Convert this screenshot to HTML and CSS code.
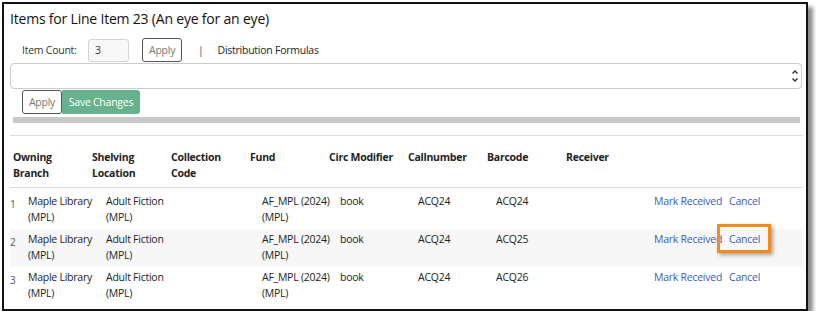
FILE: index.html
```html
<!DOCTYPE html>
<html lang="en">
<head>
  <meta charset="UTF-8" />
  <title>Items for Line Item 23</title>
  <link rel="stylesheet" href="styles.css">
</head>
<body>
  <div class="frame">
    <h2 class="title">Items for Line Item 23 (An eye for an eye)</h2>

    <div class="count-row">
      <label for="itemCount">Item Count:</label>
      <input type="text" id="itemCount" class="count-input" value="3" />
      <button class="btn">Apply</button>
      <span class="sep">|</span>
      <span>Distribution Formulas</span>
    </div>

    <div class="select-box">
      <svg class="spin" width="8" height="16" viewBox="0 0 8 16">
        <path d="M1.5 5.5 L4 3 L6.5 5.5" fill="none" stroke="#333" stroke-width="1.4" />
        <path d="M1.5 10.5 L4 13 L6.5 10.5" fill="none" stroke="#333" stroke-width="1.4" />
      </svg>
    </div>

    <div class="actions">
      <button class="btn">Apply</button>
      <button class="btn btn-save">Save Changes</button>
    </div>

    <div class="progress"></div>
    <div class="rule"></div>

    <div class="head">
      <div>Owning<br>Branch</div>
      <div>Shelving<br>Location</div>
      <div>Collection<br>Code</div>
      <div>Fund</div>
      <div>Circ Modifier</div>
      <div>Callnumber</div>
      <div>Barcode</div>
      <div>Receiver</div>
    </div>
    <div class="rule"></div>

    <div class="items">
      <div class="item">
        <div class="num">1</div>
        <div>Maple Library<br>(MPL)</div>
        <div>Adult Fiction<br>(MPL)</div>
        <div></div>
        <div>AF_MPL (2024)<br>(MPL)</div>
        <div>book</div>
        <div>ACQ24</div>
        <div>ACQ24</div>
        <div></div>
        <div class="links"><a href="#">Mark Received</a><a href="#" class="cancel">Cancel</a></div>
      </div>
      <div class="item alt">
        <div class="num">2</div>
        <div>Maple Library<br>(MPL)</div>
        <div>Adult Fiction<br>(MPL)</div>
        <div></div>
        <div>AF_MPL (2024)<br>(MPL)</div>
        <div>book</div>
        <div>ACQ24</div>
        <div>ACQ25</div>
        <div></div>
        <div class="links"><a href="#">Mark Received</a><a href="#" class="cancel marked">Cancel</a></div>
      </div>
      <div class="item">
        <div class="num">3</div>
        <div>Maple Library<br>(MPL)</div>
        <div>Adult Fiction<br>(MPL)</div>
        <div></div>
        <div>AF_MPL (2024)<br>(MPL)</div>
        <div>book</div>
        <div>ACQ24</div>
        <div>ACQ26</div>
        <div></div>
        <div class="links"><a href="#">Mark Received</a><a href="#" class="cancel">Cancel</a></div>
      </div>
    </div>
  </div>
</body>
</html>
```

FILE: styles.css
```css
body {
  margin: 0;
  background: #fff;
  font-family: "Open Sans", sans-serif;
  font-size: 10.5px;
  letter-spacing: -0.25px;
  color: #222;
}
.frame {
  margin: 2px 0 0 2px;
  width: 796px;
  height: 305px;
  border: 2px solid #111;
  box-shadow: 5px 5px 4px rgba(0,0,0,0.45);
  padding: 0 0 0 6px;
  overflow: hidden;
}
.title {
  margin: 0;
  padding-top: 5px;
  height: 24px;
  font-size: 14px;
  letter-spacing: -0.2px;
  font-weight: normal;
  color: #111;
}
.count-row {
  display: flex;
  align-items: center;
  height: 26px;
  margin-top: 4px;
  padding-left: 12px;
}
.count-row label {
  width: 66px;
  color: #333;
}
.count-input {
  width: 41px;
  height: 23px;
  box-sizing: border-box;
  margin: 0 13px 0 0;
  padding: 0 6px;
  border: 1px solid #d4d4d4;
  border-radius: 3px;
  background: #f8f8f8;
  font-family: inherit;
  font-size: 10.5px;
  color: #333;
}
.btn {
  height: 24px;
  box-sizing: border-box;
  padding: 0 6px;
  border: 1px solid #555;
  border-radius: 3px;
  background: #fff;
  font-family: inherit;
  font-size: 10.5px;
  letter-spacing: -0.25px;
  color: #777;
}
.count-row .btn {
  width: 40px;
}
.sep {
  margin: 0 14px 0 16px;
  color: #555;
}
.select-box {
  height: 24px;
  margin: 0 4px 0 0;
  border: 1px solid #ccc;
  border-radius: 4px;
  display: flex;
  justify-content: flex-end;
  align-items: center;
  padding-right: 2px;
}
.actions {
  display: flex;
  margin-top: 1px;
  padding-left: 12px;
}
.actions .btn {
  width: 40px;
  padding: 0;
}
.actions .btn-save {
  width: 78px;
  background: #66b28f;
  border-color: #66b28f;
  color: #fff;
  border-radius: 0 3px 3px 0;
}
.progress {
  height: 6px;
  margin: 3px 6px 0 3px;
  background: #c8c8c8;
}
.rule {
  height: 1px;
  margin-right: 3px;
  margin-top: 12px;
  background: #ddd;
}
.head {
  display: grid;
  grid-template-columns: repeat(8, 79px);
  padding: 13px 0 6px 3px;
  font-weight: bold;
  line-height: 16px;
  color: #222;
}
.head + .rule {
  margin-top: 0;
}
.items {
  margin-top: 3px;
}
.item {
  display: grid;
  grid-template-columns: 18px repeat(8, 78px) 1fr;
  height: 38px;
  box-sizing: border-box;
  padding-top: 2px;
  line-height: 16px;
  margin-right: 3px;
}
.item.alt {
  background: #f7f7f7;
}
.num {
  padding-top: 3px;
  font-size: 10px;
  color: #555;
}
.links {
  padding-left: 2px;
}
.links a {
  color: #3e5bb5;
  text-decoration: none;
}
.links .cancel {
  margin-left: 7px;
}
.marked {
  position: relative;
}
.marked::after {
  content: "";
  position: absolute;
  left: -12px;
  top: -8px;
  width: 48px;
  height: 23px;
  border: 3px solid #f58a1f;
  box-shadow: 2px 2px 4px rgba(0,0,0,0.35);
}
```
